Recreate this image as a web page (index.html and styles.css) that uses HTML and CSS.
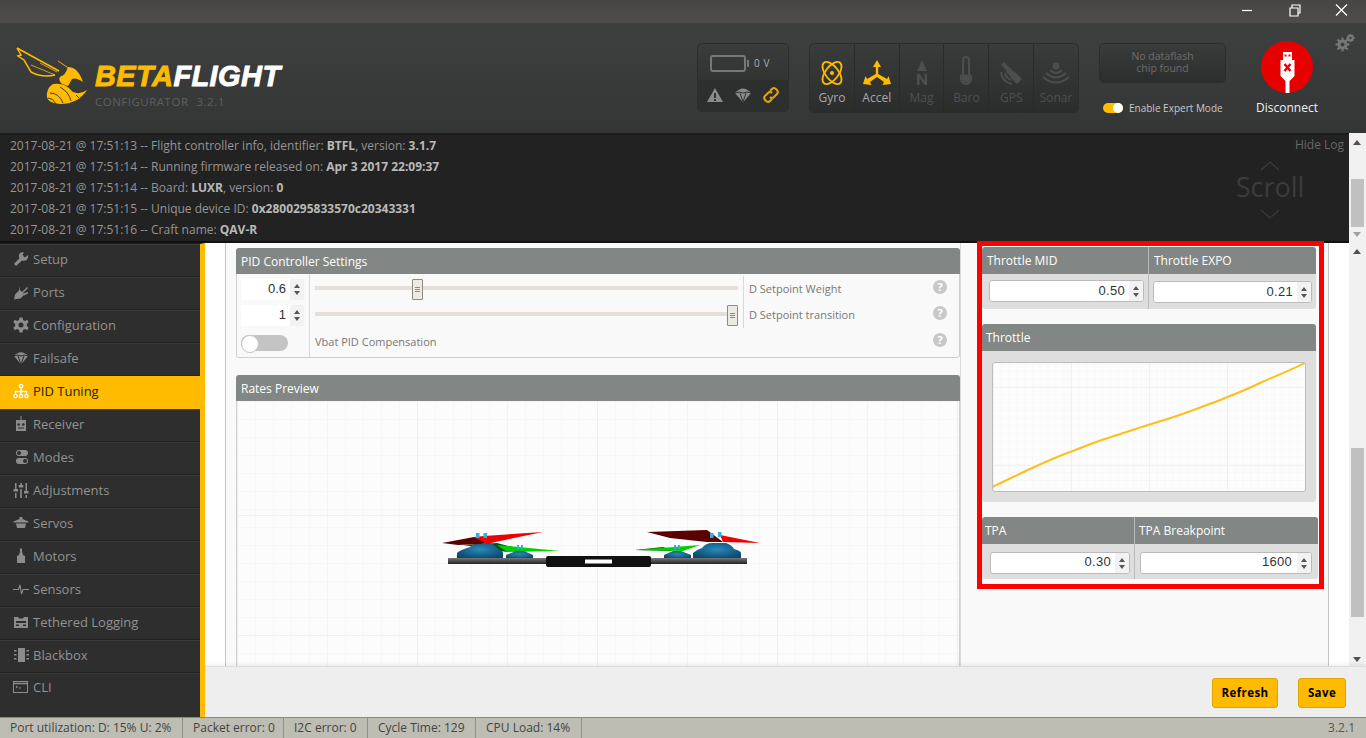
FILE: index.html
```html
<!DOCTYPE html>
<html lang="en">
<head>
<meta charset="utf-8">
<title>Betaflight Configurator</title>
<link rel="stylesheet" href="styles.css">
</head>
<body>
<div class="app">
  <div class="titlebar">
    <svg class="winbtn" width="120" height="20" viewBox="0 0 120 20" fill="none" stroke="#fff" stroke-width="1.2">
      <path d="M1 10.5H11"/>
      <path d="M49 8H57V16H49ZM51 8V5H59V13H57"/>
      <path d="M95 4.500L106 15.500M106 4.500L95 15.500"/>
    </svg>
  </div>
  <header class="header">
    <div class="brand">
      <svg class="wasp" width="74" height="60" viewBox="0 0 74 60">
        <g fill="none" stroke="#ffbb00" stroke-linejoin="miter">
          <path d="M2 2L44 25" stroke-width="1.5"/>
          <path d="M2 2L6 9L3 10L9 14L16 26Q27 32 40 29" stroke-width="1.500"/>
          <path d="M16 19L40 29M25 17L42 26" stroke-width=".8"/>
          <path d="M43 15L55 23" stroke-width=".9"/>
        </g>
        <path fill="#ffbb00" d="M53 21Q63 21 68 36Q61 31 57 33L53 40L47 38Q42 33 46 30Q50 30 53 21Z"/>
        <path fill="#ffbb00" d="M38 38Q50 36 58 46Q65 49 72 44Q63 58 45 58Q30 57 32 47Q33 41 38 38Z"/>
        <g fill="none" stroke="#3a3c3b" stroke-width="1">
          <path d="M35 47Q44 47 48 57M45 41Q54 46 56 55M33 52Q38 52 41 58M61 49L64 52"/>
        </g>
      </svg>
      <div class="brandtext">
        <div class="wordmark"><span class="beta">BETA</span>FLIGHT</div>
        <div class="subtitle">CONFIGURATOR<span class="subver">3.2.1</span></div>
      </div>
    </div>
    <div class="battery">
      <div class="batt-top">
        <span class="batt-shell"></span><span class="batt-cap"></span><span class="batt-v">0 V</span>
      </div>
      <div class="batt-low">
        <svg width="16" height="16" viewBox="0 0 16 16"><path fill="#8a8a8a" d="M8 1L16 15H0Z"/><path fill="#333" d="M7 6H9V11H7ZM7 12H9V14H7Z"/></svg>
        <svg width="16" height="16" viewBox="0 0 16 16"><path fill="#8a8a8a" d="M0 6Q8-3 16 6L8 15.500Z"/><path stroke="#333" fill="none" d="M0 6Q4 4 8 6Q12 4 16 6M5 6L8 15L11 6"/></svg>
        <svg width="16" height="16" viewBox="0 0 16 16" fill="none" stroke="#e5a800" stroke-width="2"><path d="M7 4L9 2Q11 0 13.500 2.500Q16 5 14 7L11 10Q9 12 7 10"/><path d="M9 12L7 14Q5 16 2.500 13.500Q0 11 2 9L5 6Q7 4 9 6"/></svg>
      </div>
    </div>
    <div class="sensors">
      <div class="sensor on">
        <svg width="26" height="26" viewBox="0 0 26 26" fill="none" stroke="#ffbb00" stroke-width="1.800"><ellipse cx="13" cy="13" rx="6.500" ry="13" transform="rotate(-38 13 13)"/><ellipse cx="13" cy="13" rx="6.500" ry="13" transform="rotate(38 13 13)"/><circle cx="13" cy="13" r="2" fill="#ffbb00" stroke="none"/></svg>
        <span>Gyro</span>
      </div>
      <div class="sensor on">
        <svg width="28" height="26" viewBox="0 0 28 26" fill="#ffbb00"><path d="M14 0L18 7H15.200V14L24 19L25.500 16L28 24L19.500 25L21 22L14 17L7 22L8.500 25L0 24L2.500 16L4 19L12.800 14V7H10Z"/></svg>
        <span>Accel</span>
      </div>
      <div class="sensor">
        <svg width="26" height="26" viewBox="0 0 26 26" fill="#4d4d4d"><path d="M13 0L18 11H8Z"/><path d="M8 25V14H10.500L15.500 21V14H18V25H15.500L10.500 18V25Z"/></svg>
        <span>Mag</span>
      </div>
      <div class="sensor">
        <svg width="26" height="30" viewBox="0 0 26 30" fill="none" stroke="#4d4d4d" stroke-width="2"><path d="M10 18V4Q10 1 13 1Q16 1 16 4V18Q20 22 17 26Q13 30 9 26Q6 22 10 18Z"/><circle cx="13" cy="22.500" r="3" fill="#4d4d4d"/></svg>
        <span>Baro</span>
      </div>
      <div class="sensor">
        <svg width="26" height="26" viewBox="0 0 26 26" fill="#4d4d4d"><path d="M6 2L13 9L10 12L3 5ZM17 12L24 19L19 24L12 17Z"/><path d="M12 8L18 14L14 18L8 12Z"/><path fill="none" stroke="#4d4d4d" stroke-width="2" d="M3 12Q4 22 14 24M7 13Q8 18 13 20"/></svg>
        <span>GPS</span>
      </div>
      <div class="sensor">
        <svg width="28" height="24" viewBox="0 0 28 24" fill="none" stroke="#4d4d4d" stroke-width="2"><circle cx="14" cy="4" r="2.500" fill="#4d4d4d"/><path d="M8 8Q14 14 20 8M4 11Q14 20 24 11M1 15Q14 26 27 15"/></svg>
        <span>Sonar</span>
      </div>
    </div>
    <div class="flashcol">
      <div class="dataflash">No dataflash<br>chip found</div>
      <div class="expert"><span class="exp-toggle"></span><span>Enable Expert Mode</span></div>
    </div>
    <div class="connect">
      <div class="redball">
        <svg width="15" height="41" viewBox="0 0 15 41" fill="#fff"><path d="M3 0H12V8H14.500V24L9.500 29V41H5.500V29L.5 24V8H3Z"/><path fill="#e60000" d="M4.500 2.500H6.500V4.500H4.500ZM8.500 2.500H10.500V4.500H8.500Z"/><path stroke="#e60000" stroke-width="2.400" d="M4.500 12L10.500 19M10.500 12L4.500 19"/></svg>
      </div>
      <div class="disconnect">Disconnect</div>
    </div>
    <svg class="gear" width="20" height="18" viewBox="0 0 20 18" fill="#777"><circle cx="7.500" cy="10.500" r="5"/><circle cx="15.500" cy="4" r="3"/><path stroke="#777" stroke-width="2" d="M7.500 3.500V17.500M.5 10.500H14.500M2.500 5.500L12.500 15.500M12.500 5.500L2.500 15.500M15.500 0V8M11.500 4H19.500M12.700 1.200L18.300 6.800M18.300 1.200L12.700 6.800"/><circle cx="7.500" cy="10.500" r="2" fill="#3d3f3e"/><circle cx="15.500" cy="4" r="1.200" fill="#3d3f3e"/></svg>
  </header>
  <section class="logrow">
    <div class="log">
      <div class="lines">
        <div>2017-08-21 @ 17:51:13 -- Flight controller info, identifier: <b>BTFL</b>, version: <b>3.1.7</b></div>
        <div>2017-08-21 @ 17:51:14 -- Running firmware released on: <b>Apr 3 2017 22:09:37</b></div>
        <div>2017-08-21 @ 17:51:14 -- Board: <b>LUXR</b>, version: <b>0</b></div>
        <div>2017-08-21 @ 17:51:15 -- Unique device ID: <b>0x2800295833570c20343331</b></div>
        <div>2017-08-21 @ 17:51:16 -- Craft name: <b>QAV-R</b></div>
      </div>
      <div class="logside">
        <div class="hidelog">Hide Log</div>
        <div class="scrollhint">
          <svg width="20" height="10" viewBox="0 0 20 10" fill="none" stroke="#3c3c3c" stroke-width="1.200"><path d="M1 9L10 1L19 9"/></svg>
          <span class="scrollword">Scroll</span>
          <svg width="20" height="10" viewBox="0 0 20 10" fill="none" stroke="#3c3c3c" stroke-width="1.200"><path d="M1 1L10 9L19 1"/></svg>
        </div>
      </div>
    </div>
    <div class="vscroll logscroll">
      <i class="arr up"></i><div class="thumb"></div><i class="arr dn"></i>
    </div>
  </section>
  <div class="body">
    <nav class="sidebar">
      <div class="nav"><svg viewBox="0 0 16 16"><path d="M15 1L11 5L9.500 4L11 1.500Q7.500 .5 6 3.500Q5.500 5.500 6.500 7L1 13L3 15L9 9.500Q12 10.500 14 8.500Q15.500 6.500 15 4L12 6.500L10.500 5.500"/></svg>Setup</div>
      <div class="nav"><svg viewBox="0 0 16 16"><path d="M7 2V6L9 8L14 3L15 4L10 9L11 11L7.500 14.500L3.500 15L1 15.500L1.500 13L2 10.500L6 6.500Z"/><path d="M10 9.500L15 8V9.500L11 11.500Z"/></svg>Ports</div>
      <div class="nav"><svg viewBox="0 0 16 16"><path d="M6.500 .5H9.500L10 3L12 4L14.200 2.800L15.700 5.300L13.800 7V9L15.700 10.700L14.200 13.200L12 12L10 13L9.500 15.500H6.500L6 13L4 12L1.800 13.200L.3 10.700L2.200 9V7L.3 5.300L1.800 2.800L4 4L6 3ZM8 5.500A2.500 2.500 0 1 0 8 10.500A2.500 2.500 0 1 0 8 5.500Z" fill-rule="evenodd"/></svg>Configuration</div>
      <div class="nav"><svg viewBox="0 0 16 16"><path d="M1 6Q8-1.500 15 6L8 14.500Z"/><path fill="none" stroke="#2e2e2e" d="M1 6Q4.500 4 8 6Q11.500 4 15 6M5 6L8 14.500L11 6"/></svg>Failsafe</div>
      <div class="nav active"><svg class="line" viewBox="0 0 16 16" stroke="#fff" stroke-width="1.300"><circle cx="8" cy="3" r="1.700"/><circle cx="2.500" cy="13" r="1.700"/><circle cx="8" cy="13" r="1.700"/><circle cx="13.500" cy="13" r="1.700"/><path d="M8 4.700V11.300M2.500 11.300V8.500H13.500V11.300"/></svg>PID Tuning</div>
      <div class="nav"><svg viewBox="0 0 16 16"><path d="M7.500 0H8.500V4H13V15H3V4H7.500Z"/><circle cx="5.700" cy="8.500" r="1.300" fill="#2e2e2e"/><circle cx="10.300" cy="8.500" r="1.300" fill="#2e2e2e"/><path d="M5 11.500H11V12.500H5Z" fill="#2e2e2e"/></svg>Receiver</div>
      <div class="nav"><svg viewBox="0 0 16 16"><rect x="3" y="1" width="12" height="6" rx="3"/><rect x="3" y="9" width="12" height="6" rx="3"/><circle cx="6" cy="4" r="2" fill="#2e2e2e"/><circle cx="12" cy="12" r="2" fill="#2e2e2e"/></svg>Modes</div>
      <div class="nav"><svg viewBox="0 0 16 16"><path d="M2 1H3.500V7H5V9.500H.5V7H2ZM2 11H3.500V16H2ZM7.200 1H8.800V3H10.300V5.500H5.700V3H7.200ZM7.200 7H8.800V16H7.200ZM12.500 1H14V9H15.500V11.500H11V9H12.500ZM12.500 13H14V16H12.500Z"/></svg>Adjustments</div>
      <div class="nav"><svg viewBox="0 0 16 16"><path d="M6.500 2H9.500V4L15.500 6.500V7.500H.5V6.500L6.500 4ZM3 8.500H13L12 13H4Z"/></svg>Servos</div>
      <div class="nav"><svg viewBox="0 0 16 16"><path d="M7 .5H9V3.500L10 7L12 8V15H4V8L6 7L7 3.500Z"/></svg>Motors</div>
      <div class="nav"><svg class="line" viewBox="0 0 16 16" stroke="#8c8c8c" stroke-width="1.100"><path d="M0 8.500H5.500L7 4L8.500 13L10 8.500H16"/></svg>Sensors</div>
      <div class="nav"><svg viewBox="0 0 16 16"><path d="M1 3H5L6 4.500H10L11 3H15V14H1Z"/><path d="M3 7H13V9H3ZM3 10.500H6V12H3ZM10 10.500H13V12H10Z" fill="#2e2e2e"/></svg>Tethered Logging</div>
      <div class="nav"><svg viewBox="0 0 16 16"><path d="M5 1H12V15H5ZM1 3H3.500V4.500H1ZM1 7H3.500V8.500H1ZM1 11H3.500V12.500H1ZM13.500 3H16V4.500H13.500ZM13.500 7H16V8.500H13.500ZM13.500 11H16V12.500H13.500Z"/></svg>Blackbox</div>
      <div class="nav"><svg class="line" viewBox="0 0 16 16" stroke="#8c8c8c"><rect x=".5" y="2.500" width="14" height="11"/><path d="M1 4.500H14" stroke-width="1.500"/><path d="M3 7L4.500 8L3 9M6 9H8"/></svg>CLI</div>
    </nav>
    <div class="work">
      <div class="workrow">
        <div class="scrollarea">
          <main class="sheet">
            <div class="leftcol">
              <div class="panel pid">
                <div class="phead">PID Controller Settings</div>
                <div class="pid-grid">
                  <div class="pid-values">
                    <div class="pnum"><span class="pval">0.6</span><span class="spin"><i class="arr2 up"></i><i class="arr2 dn"></i></span></div>
                    <div class="pnum"><span class="pval">1</span><span class="spin"><i class="arr2 up"></i><i class="arr2 dn"></i></span></div>
                    <div class="off-toggle"></div>
                  </div>
                  <div class="pid-main">
                    <div class="slider-row">
                      <div class="slider"><div class="track"></div><div class="handle h60"><span class="grip"></span></div></div>
                      <div class="plabel">D Setpoint Weight</div>
                      <span class="help">?</span>
                    </div>
                    <div class="slider-row">
                      <div class="slider"><div class="track"></div><div class="handle h100"><span class="grip"></span></div></div>
                      <div class="plabel">D Setpoint transition</div>
                      <span class="help">?</span>
                    </div>
                    <div class="vbat-row">
                      <div class="plabel">Vbat PID Compensation</div>
                      <span class="help">?</span>
                    </div>
                  </div>
                </div>
              </div>
              <div class="panel rates">
                <div class="phead">Rates Preview</div>
                <div class="ratesbox">
                  <svg class="model" width="340" height="70" viewBox="0 0 340 70">
                    <defs>
                      <linearGradient id="fr" x1="0" y1="0" x2="0" y2="1"><stop offset="0" stop-color="#777"/><stop offset="1" stop-color="#222"/></linearGradient>
                      <radialGradient id="mo" cx=".5" cy=".4" r=".6"><stop offset="0" stop-color="#2a8ab8"/><stop offset="1" stop-color="#0a4a70"/></radialGradient>
                    </defs>
                    <path fill="#005500" d="M33 35L67 33L90 39L77 42Z"/>
                    <path fill="#00d000" d="M67 35L130 41L77 42Z"/>
                    <path fill="#005500" d="M205 40L233 37L243 41Z"/>
                    <path fill="#00d000" d="M205 40L270 35L253 41Z"/>
                    <path fill="url(#mo)" d="M27 49V43Q30 40 40 37Q44 33 50 33H60Q66 35 68 39Q73 41 73 43V49Z"/>
                    <path fill="url(#mo)" d="M76 49V45L86 41H94L103 45V49Z"/>
                    <path fill="url(#mo)" d="M234 49V45L243 41H251L261 45V49Z"/>
                    <path fill="url(#mo)" d="M263 49V43Q266 40 272 38Q276 33 282 33H296Q302 35 304 39Q311 41 311 43V49Z"/>
                    <path fill="#5a0000" d="M12 33L44 27L60 31L50 34L28 35Z"/>
                    <path fill="#f00000" d="M44 27L54 26L113 22L70 31L57 34Z"/>
                    <path fill="#5a0000" d="M217 22L277 20L293 32L277 32L240 28Z"/>
                    <path fill="#f00000" d="M290 25L330 33L293 32Z"/>
                    <rect x="46" y="23" width="3.500" height="5" fill="#30b0e0"/><rect x="53.500" y="23" width="3.500" height="5" fill="#30b0e0"/>
                    <rect x="288" y="22" width="3.500" height="5" fill="#30b0e0"/><rect x="280" y="23" width="3.500" height="5" fill="#30b0e0"/>
                    <rect x="87" y="35" width="2" height="4" fill="#30b0e0"/><rect x="91" y="35" width="2" height="4" fill="#30b0e0"/>
                    <rect x="244" y="35" width="2" height="4" fill="#30b0e0"/><rect x="248" y="35" width="2" height="4" fill="#30b0e0"/>
                    <rect x="18" y="48" width="299" height="6" fill="url(#fr)"/>
                    <rect x="116" y="46" width="105" height="11" rx="2" fill="#111"/>
                    <rect x="155" y="49.500" width="27" height="4" fill="#fff"/>
                  </svg>
                </div>
              </div>
            </div>
            <div class="rightcol">
              <div class="tpanel throttle-in">
                <div class="tcell wmid">
                  <div class="phead">Throttle MID</div>
                  <div class="tbody"><div class="num in1"><span class="val">0.50</span><span class="spin"><i class="arr2 up"></i><i class="arr2 dn"></i></span></div></div>
                </div>
                <div class="tcell wexpo">
                  <div class="phead">Throttle EXPO</div>
                  <div class="tbody"><div class="num in2"><span class="val">0.21</span><span class="spin"><i class="arr2 up"></i><i class="arr2 dn"></i></span></div></div>
                </div>
              </div>
              <div class="tpanel curve">
                <div class="phead">Throttle</div>
                <div class="curvebody">
                  <div class="canvas">
                    <svg width="312" height="128" viewBox="0 0 312 128" fill="none"><path stroke="#fcbf1e" stroke-width="2" d="M-1 124C12 118 24 112 37 106C50 100 63 94 77 89C90 84 102 79 115 75C128 71 142 66 155 62C168 58 182 54 195 49C208 44 220 40 232 35C245 30 257 25 269 19C283 13 298 7 312 0"/></svg>
                  </div>
                </div>
              </div>
              <div class="tpanel tpa">
                <div class="tcell wtpa">
                  <div class="phead">TPA</div>
                  <div class="tbody"><div class="num in3"><span class="val">0.30</span><span class="spin"><i class="arr2 up"></i><i class="arr2 dn"></i></span></div></div>
                </div>
                <div class="tcell wbp">
                  <div class="phead">TPA Breakpoint</div>
                  <div class="tbody"><div class="num in4"><span class="val">1600</span><span class="spin"><i class="arr2 up"></i><i class="arr2 dn"></i></span></div></div>
                </div>
              </div>
            </div>
          </main>
        </div>
        <div class="vscroll mainscroll">
          <i class="arr up"></i><div class="thumb2"></div><i class="arr dn"></i>
        </div>
      </div>
      <div class="toolbar">
        <button class="btn refresh">Refresh</button>
        <button class="btn save">Save</button>
      </div>
    </div>
  </div>
  <footer class="status">
    <span class="st s1">Port utilization: D: 15% U: 2%</span>
    <span class="st s2">Packet error: 0</span>
    <span class="st s3">I2C error: 0</span>
    <span class="st s4">Cycle Time: 129</span>
    <span class="st s5">CPU Load: 14%</span>
    <span class="ver">3.2.1</span>
  </footer>
  <div class="redbox"></div>
</div>
</body>
</html>
```
FILE: styles.css
```css
* { box-sizing: border-box; }
html, body { margin: 0; padding: 0; height: 100%; overflow: hidden; }
body { font-family: "Open Sans", "Liberation Sans", sans-serif; font-size: 12px; background: #fff; }
.app { width: 1366px; height: 738px; display: flex; flex-direction: column; position: relative; }

.titlebar { height: 23px; background: linear-gradient(#474644, #4e4d4b); display: flex; justify-content: flex-end; flex: none; }
.winbtn { margin: 0 5px 0 0; display: block; }

.header { height: 110px; flex: none; display: flex; align-items: flex-start; background: linear-gradient(#3e403f, #343635); }
.brand { width: 697px; padding: 23px 0 0 15px; display: flex; flex: none; }
.wasp { flex: none; display: block; }
.brandtext { margin-left: 6px; padding-top: 15px; }
.wordmark { font-family: "Liberation Sans", sans-serif; font-weight: 700; font-style: italic; font-size: 29px; line-height: 30px; color: #fff; letter-spacing: .4px; -webkit-text-stroke: .9px currentColor; }
.beta { color: #ffbb00; }
.subtitle { font-size: 11.500px; line-height: 16px; color: #5d5f5e; letter-spacing: .5px; margin-top: 3px; }
.subver { margin-left: 8px; }

.battery { width: 92px; height: 69px; margin-top: 20px; flex: none; border: 1px solid #2c2c2c; border-radius: 5px; background: linear-gradient(#3a3c3b, #2c2d2d); overflow: hidden; }
.batt-top { height: 36px; display: flex; align-items: center; padding: 2px 0 0 12px; }
.batt-shell { width: 36px; height: 17px; border: 2px solid #777; border-radius: 3px; }
.batt-cap { width: 2px; height: 7px; background: #777; margin-left: 1px; }
.batt-v { font-size: 10px; color: #aaa; margin-left: 5px; letter-spacing: .6px; }
.batt-low { height: 32px; background: #2d2e2e; display: flex; align-items: center; gap: 12px; padding: 0 0 2px 9px; }

.sensors { width: 270px; height: 70px; margin: 20px 0 0 20px; flex: none; display: flex; border: 1px solid #2c2c2c; border-radius: 5px; background: linear-gradient(#3a3c3b, #2b2c2c); overflow: hidden; }
.sensor { flex: 1; display: flex; flex-direction: column; align-items: center; justify-content: flex-end; color: #4f4f4f; font-size: 12px; line-height: 16px; padding-bottom: 6px; border-right: 1px solid #2a2a2a; gap: 4px; }
.sensor:last-child { border-right: 0; }
.sensor svg { display: block; }
.sensor.on { color: #a8a8a8; }

.flashcol { width: 127px; margin: 20px 0 0 20px; flex: none; }
.dataflash { height: 40px; border: 1px solid #2c2c2c; border-radius: 5px; background: linear-gradient(#3a3c3b, #2c2d2d); color: #6d6d6d; font-size: 10.500px; line-height: 12px; text-align: center; padding-top: 6px; }
.expert { display: flex; align-items: center; margin: 18px 0 0 4px; color: #c8c8c8; font-size: 10px; line-height: 14px; white-space: nowrap; }
.exp-toggle { width: 20px; height: 10px; border-radius: 5px; background: #ffbb00; margin-right: 6px; position: relative; flex: none; }
.exp-toggle::after { content: ""; position: absolute; right: 0; top: 0; width: 10px; height: 10px; border-radius: 50%; background: #fff; }

.connect { width: 90px; margin: 18px 0 0 16px; flex: none; display: flex; flex-direction: column; align-items: center; }
.redball { width: 52px; height: 52px; border-radius: 50%; background: #e60000; display: flex; justify-content: center; padding-top: 11px; }
.redball svg { display: block; }
.disconnect { color: #f0f0f0; font-size: 12px; line-height: 16px; margin-top: 7px; }
.gear { margin: 11px 0 0 3px; flex: none; }

.logrow { height: 110px; flex: none; display: flex; }
.log { width: 1349px; background: #222; display: flex; justify-content: space-between; border-top: 2px solid #1c1c1c; border-bottom: 2px solid #111; }
.lines { padding: 0 0 0 10px; color: #959595; font-size: 12px; line-height: 21px; }
.lines b { color: #b9b9b9; font-weight: 700; }
.logside { width: 130px; padding: 0 5px 0 0; display: flex; flex-direction: column; align-items: flex-end; }
.hidelog { color: #666; font-size: 12px; line-height: 21px; margin-top: -1px; }
.scrollhint { width: 118px; margin-top: 6px; padding-right: 30px; display: flex; flex-direction: column; align-items: center; color: #3c3c3c; font-size: 27px; line-height: 38px; }
.scrollhint svg { display: block; }
.scrollword { display: block; margin: -3px 0 3px; }

.vscroll { width: 17px; flex: none; background: #f1f1f1; display: flex; flex-direction: column; align-items: center; position: relative; }
.arr { display: block; width: 0; height: 0; border-left: 4px solid transparent; border-right: 4px solid transparent; position: absolute; left: 4px; }
.arr.up { border-bottom: 5px solid #505050; }
.arr.dn { border-top: 5px solid #505050; }
.logscroll .arr.up { top: 7px; }
.logscroll .arr.dn { top: 99px; border-top-color: #a0a0a0; }
.thumb { width: 13px; height: 48px; margin-top: 46px; background: #c0c0c0; }
.mainscroll .arr.up { top: 6px; }
.mainscroll .arr.dn { top: 414px; }
.thumb2 { width: 13px; height: 169px; margin-top: 205px; background: #c0c0c0; }

.body { height: 474px; flex: none; display: flex; }
.sidebar { width: 205px; flex: none; background: #2e2e2e; border-right: 5px solid #ffbb00; border-top: 1px solid #1d1d1d; }
.nav { height: 33px; width: 200px; display: flex; align-items: center; padding: 0 0 3px 13px; color: #929292; font-size: 13px; border-bottom: 1px solid #222; border-top: 1px solid #3a3a3a; white-space: nowrap; }
.nav:last-child { border-bottom: 0; height: 31px; padding-bottom: 4px; }
.nav svg { width: 16px; height: 16px; margin-right: 4px; fill: #8c8c8c; flex: none; }
.nav svg.line { fill: none; }
.nav.active { width: 205px; background: #ffbb00; color: #222; border-color: #ffbb00; }

.work { flex: 1; display: flex; flex-direction: column; min-width: 0; }
.workrow { height: 423px; flex: none; display: flex; }
.scrollarea { width: 1144px; flex: none; background: #fff; padding: 0 20px; overflow: hidden; }
.sheet { width: 1104px; height: 423px; background: #f9f9f9; border-left: 1px solid #c4c4c4; border-right: 1px solid #c4c4c4; display: flex; }
.leftcol { width: 735px; flex: none; padding: 5px 0 0 10px; border-right: 1px solid #dcdcdc; }
.rightcol { width: 367px; flex: none; padding: 4px 0 0 21px; }

.panel { width: 724px; border-radius: 3px; background: #f9f9f9; overflow: hidden; }
.phead { height: 27px; background: #828785; color: #fff; font-size: 12px; line-height: 27px; padding-left: 5px; white-space: nowrap; }
.panel .phead { height: 26px; line-height: 28px; }
.pid { height: 110px; }
.pid-grid { display: flex; height: 84px; border: 1px solid #cfcfcf; border-top: 0; border-radius: 0 0 3px 3px; }
.pid-values { width: 73px; flex: none; padding: 5px 0 0 4px; border-right: 1px solid #d8d8d8; }
.pnum { width: 63px; height: 21px; display: flex; background: #fff; margin-bottom: 5px; }
.pval { width: 49px; text-align: right; padding-right: 4px; font-family: "Liberation Sans", sans-serif; font-size: 13px; line-height: 20px; color: #333; }
.spin { width: 14px; flex: none; background: #f2f2f2; display: flex; flex-direction: column; align-items: center; justify-content: center; gap: 3px; }
.arr2 { display: block; width: 0; height: 0; border-left: 3.500px solid transparent; border-right: 3.500px solid transparent; }
.arr2.up { border-bottom: 4px solid #555; }
.arr2.dn { border-top: 4px solid #555; }
.off-toggle { width: 47px; height: 16px; border-radius: 8px; background: #c4c4c4; position: relative; margin-top: 9px; }
.off-toggle::after { content: ""; position: absolute; left: 0; top: 0; width: 16px; height: 16px; border-radius: 50%; background: #fff; border: 1px solid #c4c4c4; }
.pid-main { flex: 1; min-width: 0; padding: 2px 0 0 5px; }
.slider-row { display: flex; height: 26px; align-items: center; }
.slider { width: 423px; height: 22px; position: relative; flex: none; margin-right: 5px; }
.track { position: absolute; left: 0; right: 0; top: 8px; height: 4px; background: #e4dfd9; }
.handle { position: absolute; top: 1px; width: 11px; height: 21px; background: #ede9e3; border: 1px solid #8e8a82; border-radius: 1px; display: flex; align-items: center; justify-content: center; }
.h60 { left: 97px; }
.h100 { right: 0; }
.grip { width: 5px; height: 5px; border-top: 1px solid #888; border-bottom: 1px solid #888; position: relative; }
.grip::after { content: ""; position: absolute; left: 0; right: 0; top: 1px; height: 1px; background: #888; }
.plabel { color: #777; font-size: 11px; padding-left: 5px; border-left: 1px solid #d8d8d8; height: 26px; line-height: 26px; flex: 1; }
.vbat-row { display: flex; align-items: center; height: 26px; margin-top: 1px; }
.vbat-row .plabel { border-left: 0; padding-left: 0; }
.help { width: 14px; height: 14px; border-radius: 50%; background: #c8c8c8; color: #fff; font-size: 11px; font-weight: 700; line-height: 14px; text-align: center; margin: -4px 12px 0 0; flex: none; }

.rates { margin-top: 17px; height: 320px; }
.ratesbox {
  height: 293px; overflow: hidden; padding: 109px 0 0 193px; background-color: #fcfcfc;
  border-left: 1px solid #cfcfcf; border-right: 1px solid #cfcfcf;
  background-image:
    linear-gradient(#f0f0f0 1px, transparent 1px), linear-gradient(90deg, #eeeeee 1px, transparent 1px),
    linear-gradient(90deg, #f3f3f3 1px, transparent 1px),
    linear-gradient(#f7f7f7 1px, transparent 1px), linear-gradient(90deg, #f7f7f7 1px, transparent 1px);
  background-size: 100% 120px, 180px 100%, 90px 100%, 18px 18px, 18px 18px;
  background-position: 0 -6px, 0 0, 0 0, 0 0, 0 0;
}
.model { display: block; }

.tpanel { border-radius: 3px; overflow: hidden; display: flex; }
.throttle-in { width: 334px; }
.tcell { display: flex; flex-direction: column; }
.wmid { width: 167px; border-right: 1px solid #bbb; }
.wexpo { width: 167px; }
.tbody { height: 35px; background: #dedede; padding-top: 6px; }
.num { height: 22px; display: flex; background: #fff; border: 1px solid #bbb; border-radius: 3px; overflow: hidden; }
.val { flex: 1; text-align: right; padding-right: 4px; font-family: "Liberation Sans", sans-serif; font-size: 13px; line-height: 20px; letter-spacing: .3px; color: #333; }
.in1 { width: 155px; margin-left: 7px; }
.in2 { width: 159px; margin: 1px 0 0 4px; }
.in3 { width: 140px; margin-left: 8px; }
.in4 { width: 172px; margin-left: 5px; }
.in3 .val, .in4 .val { line-height: 18px; }
.in4 .val { padding-right: 5px; }
.curve { width: 334px; display: block; margin-top: 15px; height: 178px; }
.curve .phead { padding-left: 4px; }
.curvebody { height: 151px; background: #dedede; padding: 11px 0 0 10px; }
.canvas {
  width: 314px; height: 130px; border: 1px solid #bdbdbd; border-radius: 3px; background-color: #fcfcfc;
  background-image:
    linear-gradient(#f2f2f2 1px, transparent 1px), linear-gradient(90deg, #f0f0f0 1px, transparent 1px),
    linear-gradient(#f8f8f8 1px, transparent 1px), linear-gradient(90deg, #f8f8f8 1px, transparent 1px);
  background-size: 100% 78px, 78px 100%, 7.800px 7.800px, 7.800px 7.800px;
  background-position: 0 24px, 0 0, 0 0, 0 0;
}
.canvas svg { display: block; }
.tpa { width: 336px; margin-top: 15px; }
.wtpa { width: 153px; border-right: 1px solid #bbb; }
.wtpa .phead { padding-left: 3px; }
.wbp { width: 183px; }
.wbp .phead { padding-left: 4px; }
.tpa .tbody { padding-top: 8px; }

.redbox { position: absolute; left: 977px; top: 241px; width: 347px; height: 348px; border: 5px solid #f00; pointer-events: none; }

.toolbar { height: 51px; flex: none; background: #eee; border-top: 1px solid #ddd; box-shadow: 0 -2px 3px rgba(0,0,0,.06); display: flex; justify-content: flex-end; align-items: flex-start; padding: 11px 20px 0 0; gap: 20px; position: relative; }
.btn { height: 30px; border: 1px solid #dca500; border-radius: 3px; background: #ffbb00; color: #000; font-family: "Open Sans", sans-serif; font-weight: 700; font-size: 11.500px; letter-spacing: .4px; padding: 0 0 2px; }
.refresh { width: 66px; }
.save { width: 48px; }

.status { height: 21px; flex: none; background: #bdbdb3; border-top: 1px solid #8a8a84; display: flex; align-items: center; color: #444; font-size: 12px; line-height: 20px; white-space: nowrap; }
.st { height: 20px; padding-left: 10px; border-right: 1px solid #8f8f88; flex: none; }
.s1 { width: 183px; }
.s2 { width: 101px; }
.s3 { width: 84px; }
.s4 { width: 108px; }
.s5 { width: 106px; }
.ver { margin-left: auto; padding-right: 11px; color: #555; }
```
